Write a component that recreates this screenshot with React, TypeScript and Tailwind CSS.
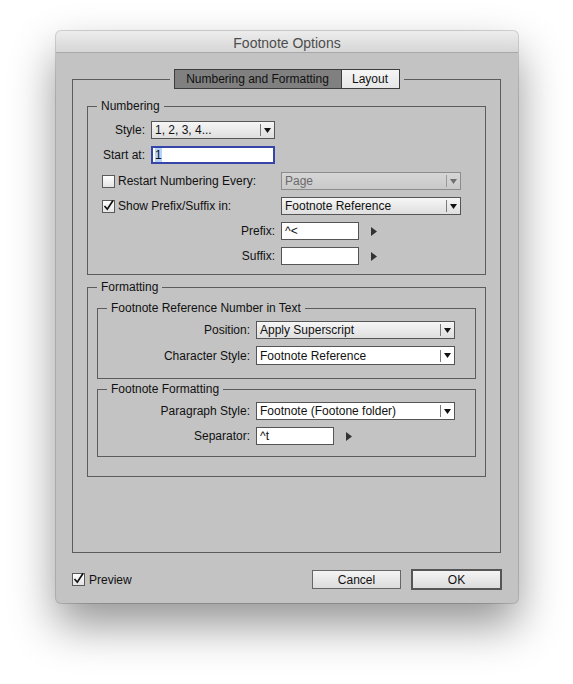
import type { ReactNode } from "react";

function Arrow({ disabled }: { disabled?: boolean }) {
  return (
    <svg width="7" height="5" viewBox="0 0 7 5" className="shrink-0">
      <polygon points="0,0 7,0 3.5,5" fill={disabled ? "#6f6f6f" : "#111"} />
    </svg>
  );
}

function Select({
  value,
  className,
  white,
  disabled,
}: {
  value: string;
  className: string;
  white?: boolean;
  disabled?: boolean;
}) {
  const skin = disabled
    ? "border-[#8c8c8c] bg-gradient-to-b from-[#d6d6d6] to-[#c9c9c9] text-[#6a6a6a]"
    : white
      ? "border-[#555] bg-white text-[#111]"
      : "border-[#555] bg-gradient-to-b from-[#f6f6f6] to-[#dedede] text-[#111]";
  return (
    <div className={`flex items-center border ${skin} ${className}`}>
      <span className="flex-1 truncate pl-[3px] leading-[14px]">{value}</span>
      <span className={`h-[12px] w-px ${disabled ? "bg-[#9a9a9a]" : "bg-[#7a7a7a]"}`} />
      <span className="flex w-[13px] justify-center">
        <Arrow disabled={disabled} />
      </span>
    </div>
  );
}

function TextBox({ value, className }: { value?: string; className: string }) {
  return (
    <div className={`flex items-center border border-[#555] bg-white pl-[3px] leading-[14px] ${className}`}>
      {value}
    </div>
  );
}

function Play() {
  return (
    <svg width="6" height="9" viewBox="0 0 6 9" className="shrink-0">
      <polygon points="0,0 6,4.5 0,9" fill="#333" />
    </svg>
  );
}

function Check({ checked, className = "" }: { checked?: boolean; className?: string }) {
  return (
    <span
      className={`relative inline-block h-[13px] w-[13px] shrink-0 border border-[#5a5a5a] bg-gradient-to-b from-white to-[#e4e4e4] ${className}`}
    >
      {checked && (
        <svg width="13" height="13" viewBox="0 0 13 13" className="absolute left-[-1px] top-[-2px]">
          <path d="M2.5 7 L5.3 10.2 L11 1.5" fill="none" stroke="#111" strokeWidth="1.7" />
        </svg>
      )}
    </span>
  );
}

function Group({
  title,
  className = "",
  children,
}: {
  title: string;
  className?: string;
  children: ReactNode;
}) {
  return (
    <fieldset className={`border border-[#5c5c5c] ${className}`}>
      <legend className="ml-[9px] px-[4px] text-[12px] leading-[14px]">{title}</legend>
      {children}
    </fieldset>
  );
}

function Button({ label, primary }: { label: string; primary?: boolean }) {
  return (
    <div
      className={`flex items-center justify-center bg-gradient-to-b from-[#f4f4f4] to-[#dcdcdc] text-[12px] leading-[14px] ${
        primary ? "h-[21px] w-[91px] border-2 border-[#555]" : "h-[19px] w-[89px] border border-[#666]"
      }`}
    >
      {label}
    </div>
  );
}

export default function App() {
  return (
    <div className="min-h-[684px] w-[573px] bg-white pl-[56px] pt-[31px] font-['Liberation_Sans',Arial,sans-serif] text-[12px] text-[#111]">
      <div className="flex h-[572px] w-[462px] flex-col overflow-hidden rounded-[5px] bg-[#c3c3c3] shadow-[0_22px_45px_rgba(0,0,0,0.42),0_0_0_1px_rgba(0,0,0,0.16)]">
        <div className="flex h-[22px] shrink-0 items-center justify-center border-b border-[#a8a8a8] bg-gradient-to-b from-[#ededed] to-[#d6d6d6] pt-[3px] text-[14px] text-[#4d4d4d]">
          Footnote Options
        </div>

        <div className="flex-1 px-[16px]">
          <fieldset className="mt-[16px] h-[484px] w-[429px] border border-[#5c5c5c] px-[14px]">
            <legend className="mx-auto px-[4px]">
              <div className="flex h-[20px] text-[12px]">
                <div className="flex w-[168px] items-center justify-center border border-[#3d3d3d] bg-[#808080]">
                  Numbering and Formatting
                </div>
                <div className="flex w-[58px] items-center justify-center border border-l-0 border-[#3d3d3d] bg-gradient-to-b from-[#f6f6f6] to-[#e6e6e6]">
                  Layout
                </div>
              </div>
            </legend>

            <Group title="Numbering" className="mt-[10px] pb-[9px]">
              <div className="mt-[8px] flex h-[18px] items-center">
                <span className="w-[57px] text-right">Style:</span>
                <Select value="1, 2, 3, 4..." className="ml-[6px] h-[18px] w-[124px]" />
              </div>
              <div className="mt-[7px] flex h-[18px] items-center">
                <span className="w-[57px] text-right">Start at:</span>
                <div className="ml-[6px] flex h-[18px] w-[124px] items-center border-2 border-[#3545aa] bg-white pl-[2px] leading-[14px]">
                  <span className="bg-[#b4d3f7]">1</span>
                </div>
              </div>
              <div className="mt-[8px] flex h-[18px] items-center">
                <div className="flex w-[193px] items-center pl-[14px]">
                  <Check />
                  <span className="ml-[3px]">Restart Numbering Every:</span>
                </div>
                <Select value="Page" disabled className="h-[18px] w-[180px]" />
              </div>
              <div className="mt-[7px] flex h-[18px] items-center">
                <div className="flex w-[193px] items-center pl-[14px]">
                  <Check checked />
                  <span className="ml-[3px]">Show Prefix/Suffix in:</span>
                </div>
                <Select value="Footnote Reference" className="h-[18px] w-[180px]" />
              </div>
              <div className="mt-[7px] flex h-[18px] items-center">
                <span className="w-[187px] text-right">Prefix:</span>
                <TextBox value="^<" className="ml-[6px] h-[18px] w-[78px]" />
                <span className="ml-[12px] flex">
                  <Play />
                </span>
              </div>
              <div className="mt-[7px] flex h-[18px] items-center">
                <span className="w-[187px] text-right">Suffix:</span>
                <TextBox className="ml-[6px] h-[18px] w-[78px]" />
                <span className="ml-[12px] flex">
                  <Play />
                </span>
              </div>
            </Group>

            <Group title="Formatting" className="mt-[5px] pb-[19px]">
              <Group title="Footnote Reference Number in Text" className="mx-[9px] mt-[7px] pb-[13px]">
                <div className="mt-[6px] flex h-[18px] items-center">
                  <span className="w-[152px] text-right">Position:</span>
                  <Select value="Apply Superscript" className="ml-[6px] h-[18px] w-[199px]" />
                </div>
                <div className="mt-[7px] flex h-[19px] items-center">
                  <span className="w-[152px] text-right">Character Style:</span>
                  <Select value="Footnote Reference" white className="ml-[6px] h-[19px] w-[199px]" />
                </div>
              </Group>
              <Group title="Footnote Formatting" className="mx-[9px] mt-[3px] pb-[11px]">
                <div className="mt-[6px] flex h-[18px] items-center">
                  <span className="w-[152px] text-right">Paragraph Style:</span>
                  <Select value="Footnote (Footone folder)" white className="ml-[6px] h-[18px] w-[199px]" />
                </div>
                <div className="mt-[7px] flex h-[18px] items-center">
                  <span className="w-[152px] text-right">Separator:</span>
                  <TextBox value="^t" className="ml-[6px] h-[18px] w-[78px]" />
                  <span className="ml-[12px] flex">
                    <Play />
                  </span>
                </div>
              </Group>
            </Group>
          </fieldset>

          <div className="mt-[16px] flex h-[21px] items-center">
            <Check checked className="h-[12px] w-[12px]" />
            <span className="ml-[4px]">Preview</span>
            <div className="ml-auto flex items-center gap-[10px]">
              <Button label="Cancel" />
              <Button label="OK" primary />
            </div>
          </div>
        </div>
      </div>
    </div>
  );
}
